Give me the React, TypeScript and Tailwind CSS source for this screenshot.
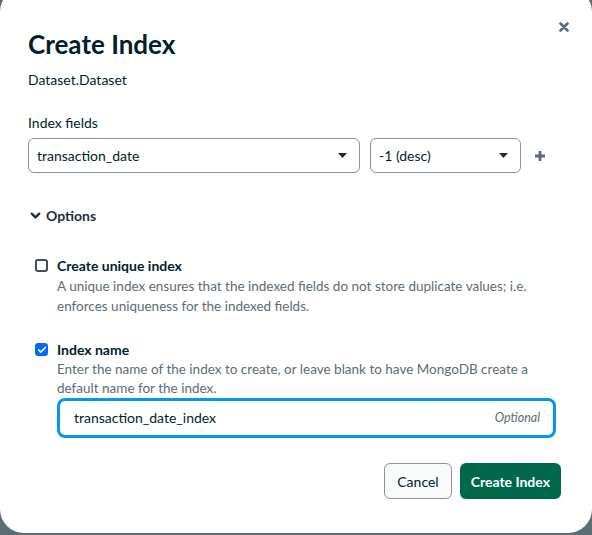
import { ChevronDown, Check } from 'lucide-react'

const font = { fontFamily: 'Lato, "Noto Sans", sans-serif' }

function Caret() {
  return (
    <svg width="9" height="5" viewBox="0 0 9 5" className="shrink-0">
      <path d="M0 0h9L4.5 5z" fill="#1c2d38" />
    </svg>
  )
}

function Select({ value, className }: { value: string; className: string }) {
  return (
    <div
      className={`h-[35px] flex items-center justify-between pl-2 pr-[12px] border border-[#889397] rounded-md bg-white text-[14px] text-[#001e2b] ${className}`}
    >
      <span>{value}</span>
      <Caret />
    </div>
  )
}

export default function App() {
  return (
    <div className="w-[592px] h-[535px] bg-[#5d6d74] overflow-hidden" style={font}>
      <div className="relative mt-[-12px] h-[545px] bg-white rounded-3xl pt-10 px-7">
        <button className="absolute right-[23px] top-[34px]">
          <svg width="10" height="10" viewBox="0 0 10 10">
            <path d="M1.5 1.5l7 7M8.5 1.5l-7 7" stroke="#5c6c75" strokeWidth="2.6" strokeLinecap="round" />
          </svg>
        </button>

        <h1 className="text-[26px] leading-8 font-bold text-[#001e2b]">Create Index</h1>
        <p className="mt-[10px] text-[14px] leading-5 text-[#001e2b]">Dataset.Dataset</p>

        <div className="mt-[23px] text-[14px] leading-5 text-[#001e2b]">Index fields</div>
        <div className="mt-[5px] flex items-center gap-[10px]">
          <Select value="transaction_date" className="w-[332px]" />
          <Select value="-1 (desc)" className="w-[151px]" />
          <svg width="12" height="12" viewBox="0 0 12 12" className="ml-[3px]">
            <path d="M6 1v10M1 6h10" stroke="#5c6c75" strokeWidth="2.8" />
          </svg>
        </div>

        <div className="mt-[32px] flex items-center gap-[3px] text-[14px] font-bold text-[#1c2d38]">
          <ChevronDown size={15} strokeWidth={3.6} />
          <span>Options</span>
        </div>

        <div className="mt-[30px] pl-[7px]">
          <div className="flex items-start gap-[9px]">
            <div className="mt-[3px] w-[13px] h-[13px] rounded-[3px] border-2 border-[#3d4f58] bg-white" />
            <div className="leading-5">
              <div className="text-[14px] font-bold text-[#001e2b]">Create unique index</div>
              <div className="text-[13.5px] text-[#5c6c75]">
                A unique index ensures that the indexed fields do not store duplicate values; i.e.
                <br />
                enforces uniqueness for the indexed fields.
              </div>
            </div>
          </div>

          <div className="mt-[24px] flex items-start gap-[9px]">
            <div className="mt-[3px] w-[13px] h-[13px] rounded-[3px] bg-[#016bf8] flex items-center justify-center">
              <Check size={10} strokeWidth={4} className="text-white" />
            </div>
            <div className="flex-1 pr-[8px] leading-5">
              <div className="text-[14px] font-bold text-[#001e2b]">Index name</div>
              <div className="pr-[12px] text-[13.5px] leading-[19px] text-[#5c6c75]">
                Enter the name of the index to create, or leave blank to have MongoDB create a default name for the
                index.
              </div>
              <div className="h-[40px] border-[3px] border-[#0498ec] rounded-lg flex items-center justify-between pl-[14px] pr-[13px]">
                <span className="text-[14px] text-[#001e2b]">transaction_date_index</span>
                <span className="text-[12.5px] italic text-[#5c6c75]">Optional</span>
              </div>
            </div>
          </div>
        </div>

        <div className="mt-[25px] flex justify-end gap-2 pr-[3px]">
          <button className="h-[36px] px-[12px] rounded-md border border-[#889397] bg-[#f9fbfa] text-[14px] text-[#001e2b]">
            Cancel
          </button>
          <button className="h-[36px] px-[11px] rounded-md bg-[#00684a] text-[14px] font-bold text-white">
            Create Index
          </button>
        </div>
      </div>
    </div>
  )
}
